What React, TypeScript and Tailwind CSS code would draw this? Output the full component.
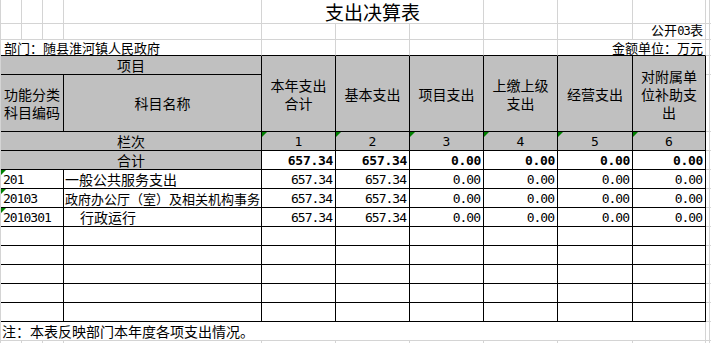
import React from "react";

const GRID = "border-r border-b border-[#d4d4d4]";
const CELL = "border-r border-b border-black";
const ABOVE = "border-r border-b border-r-[#d4d4d4] border-b-black";
const CJK = "font-['Noto_Sans_CJK_SC',sans-serif]";
const MONO = "font-['DejaVu_Sans_Mono','Noto_Sans_CJK_SC',monospace]";
const HEAD = "bg-[#c0c0c0] flex items-center justify-center text-center text-[14px] leading-[18px]";

function Tri() {
  return (
    <span className="absolute left-0 top-0 h-0 w-0 border-t-[5px] border-r-[5px] border-t-[#008000] border-r-transparent" />
  );
}

// right margin columns past the table (K, L)
function Edge() {
  return (
    <>
      <div className={GRID} />
      <div className="border-b border-[#d4d4d4]" />
    </>
  );
}

const items = [
  { code: "201", name: "一般公共服务支出", size: "text-[14px] pl-[1px]" },
  { code: "20103", name: "政府办公厅（室）及相关机构事务", size: "text-[13px] pl-[1px]" },
  { code: "2010301", name: "行政运行", size: "text-[14px] pl-[16px]" },
];
const values = ["657.34", "657.34", "0.00", "0.00", "0.00", "0.00"];
const heads = [
  ["本年支出", "合计"],
  ["基本支出"],
  ["项目支出"],
  ["上缴上级", "支出"],
  ["经营支出"],
  ["对附属单", "位补助支", "出"],
];

export default function App() {
  return (
    <div className={`h-[343px] w-[711px] overflow-hidden bg-white text-black ${CJK}`}>
      <div className="grid h-full border-l border-[#d4d4d4] grid-cols-[21px_21px_21px_198px_74px_74px_74px_74px_75px_73px_4px_1fr] grid-rows-[24px_16px_16px_19px_57px_19px_19px_19px_19px_19px_19px_19px_19px_19px_19px_19px_1fr]">
        {/* title row */}
        <div className={GRID} />
        <div className={GRID} />
        <div className={GRID} />
        <div className={GRID} />
        <div className={`${GRID} col-span-3 flex items-center justify-center text-[19px] leading-[22px]`}>
          支出决算表
        </div>
        <div className={GRID} />
        <div className={GRID} />
        <div className={GRID} />
        <Edge />

        {/* table number row */}
        <div className={GRID} />
        <div className={GRID} />
        <div className={GRID} />
        <div className={GRID} />
        <div className={GRID} />
        <div className={GRID} />
        <div className={GRID} />
        <div className={GRID} />
        <div className={GRID} />
        <div className={`${GRID} flex items-end justify-end pr-[2px] text-[13px] leading-[15px]`}>
          <span>
            公开<span className={`${MONO} text-[12px] tracking-[-0.8px]`}>03</span>表
          </span>
        </div>
        <Edge />

        {/* department row */}
        <div className={`${ABOVE} col-span-4 flex items-end whitespace-nowrap pl-[3px] text-[13px] leading-[15px]`}>
          部门：随县淮河镇人民政府
        </div>
        <div className={ABOVE} />
        <div className={ABOVE} />
        <div className={ABOVE} />
        <div className={ABOVE} />
        <div className={`${ABOVE} col-span-2 flex items-end justify-end whitespace-nowrap pr-[2px] text-[13px] leading-[15px]`}>
          金额单位：万元
        </div>
        <Edge />

        {/* header */}
        <div className={`${CELL} ${HEAD} col-span-4`}>项目</div>
        {heads.map((lines, i) => (
          <div key={i} className={`${CELL} ${HEAD} row-span-2 flex-col`}>
            {lines.map((l) => (
              <span key={l}>{l}</span>
            ))}
          </div>
        ))}
        <Edge />
        <div className={`${CELL} ${HEAD} col-span-3 flex-col`}>
          <span>功能分类</span>
          <span>科目编码</span>
        </div>
        <div className={`${CELL} ${HEAD}`}>科目名称</div>
        <Edge />

        {/* column index row */}
        <div className={`${CELL} col-span-4 flex items-end justify-center bg-[#c0c0c0] text-[14px] leading-[17px]`}>
          栏次
        </div>
        {[1, 2, 3, 4, 5, 6].map((n) => (
          <div
            key={n}
            className={`${CELL} relative flex items-end justify-center bg-[#c0c0c0] ${MONO} text-[13px] leading-[17px]`}
          >
            <Tri />
            {n}
          </div>
        ))}
        <Edge />

        {/* total row */}
        <div className={`${CELL} col-span-4 flex items-end justify-center bg-[#c0c0c0] text-[14px] leading-[17px]`}>
          合计
        </div>
        {values.map((v, i) => (
          <div
            key={i}
            className={`${CELL} flex items-end justify-end pr-[2px] ${MONO} text-[13px] font-bold leading-[17px] tracking-[-0.3px]`}
          >
            {v}
          </div>
        ))}
        <Edge />

        {/* data rows */}
        {items.map((it) => (
          <React.Fragment key={it.code}>
            <div className={`${CELL} relative col-span-3 flex items-end pl-[2px] ${MONO} text-[13px] leading-[17px] tracking-[-1px]`}>
              <Tri />
              {it.code}
            </div>
            <div className={`${CELL} flex items-end overflow-hidden whitespace-nowrap leading-[17px] ${it.size}`}>
              {it.name}
            </div>
            {values.map((v, i) => (
              <div
                key={i}
                className={`${CELL} flex items-end justify-end pr-[3px] ${MONO} text-[13px] leading-[17px] tracking-[-1px]`}
              >
                {v}
              </div>
            ))}
            <Edge />
          </React.Fragment>
        ))}

        {/* empty rows */}
        {[0, 1, 2, 3, 4].map((r) => (
          <React.Fragment key={r}>
            <div className={`${CELL} col-span-3`} />
            <div className={CELL} />
            <div className={CELL} />
            <div className={CELL} />
            <div className={CELL} />
            <div className={CELL} />
            <div className={CELL} />
            <div className={CELL} />
            <Edge />
          </React.Fragment>
        ))}

        {/* note */}
        <div className={`${GRID} col-span-10 flex items-end whitespace-nowrap pl-[1px] text-[14px] leading-[17px]`}>
          注：本表反映部门本年度各项支出情况。
        </div>
        <Edge />

        {/* bottom sliver of the sheet */}
        <div className="border-r border-[#d4d4d4]" />
        <div className="border-r border-[#d4d4d4]" />
        <div className="border-r border-[#d4d4d4]" />
        <div className="border-r border-[#d4d4d4]" />
        <div className="border-r border-[#d4d4d4]" />
        <div className="border-r border-[#d4d4d4]" />
        <div className="border-r border-[#d4d4d4]" />
        <div className="border-r border-[#d4d4d4]" />
        <div className="border-r border-[#d4d4d4]" />
        <div className="border-r border-[#d4d4d4]" />
        <div className="border-r border-[#d4d4d4]" />
        <div />
      </div>
    </div>
  );
}
